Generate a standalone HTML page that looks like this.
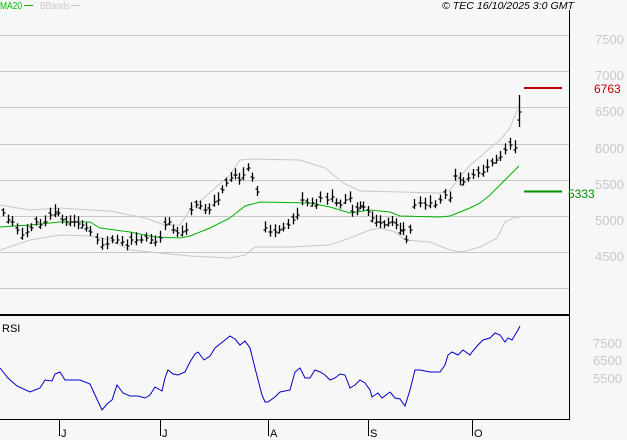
<!DOCTYPE html><html><head><meta charset="utf-8"><style>
body{margin:0;background:#f7f7f7;width:627px;height:440px;overflow:hidden;font-family:"Liberation Sans",sans-serif}
svg{display:block}
</style></head><body>
<svg id="s" width="627" height="440" xmlns="http://www.w3.org/2000/svg" font-family="Liberation Sans, sans-serif">
<rect width="627" height="440" fill="#f7f7f7"/>
<g stroke="#c8c8c8" stroke-width="1">
<line x1="0" y1="35.5" x2="569" y2="35.5"/><line x1="0" y1="71.5" x2="569" y2="71.5"/>
<line x1="0" y1="107.5" x2="569" y2="107.5"/><line x1="0" y1="144.5" x2="569" y2="144.5"/>
<line x1="0" y1="180.5" x2="569" y2="180.5"/><line x1="0" y1="216.5" x2="569" y2="216.5"/>
<line x1="0" y1="252.5" x2="569" y2="252.5"/><line x1="0" y1="288.5" x2="569" y2="288.5"/>
</g>
<line x1="569.5" y1="10" x2="569.5" y2="420" stroke="#000"/>
<line x1="0" y1="315" x2="570" y2="315" stroke="#000" stroke-width="2"/>
<line x1="0" y1="419.5" x2="570" y2="419.5" stroke="#000"/>
<g stroke="#000"><line x1="59.5" y1="420" x2="59.5" y2="436"/><line x1="160.5" y1="420" x2="160.5" y2="436"/><line x1="268.5" y1="420" x2="268.5" y2="436"/><line x1="368.5" y1="420" x2="368.5" y2="436"/><line x1="472.5" y1="420" x2="472.5" y2="436"/></g>
<g font-size="11" fill="#000"><text x="61" y="437">J</text><text x="162" y="437">J</text><text x="270" y="437">A</text><text x="370" y="437">S</text><text x="474" y="437">O</text></g>
<g font-size="13" fill="#c8c8c8"><text x="595" y="44">7500</text><text x="595" y="80">7000</text><text x="595" y="116">6500</text><text x="595" y="153">6000</text><text x="595" y="189">5500</text><text x="595" y="225">5000</text><text x="595" y="261">4500</text>
<text x="593" y="348">7500</text><text x="593" y="365">6500</text><text x="593" y="383">5500</text></g>
<text x="594" y="93" font-size="12" fill="#c00000">6763</text>
<text x="568" y="198" font-size="12" fill="#009000">5333</text>
<line x1="524" y1="88" x2="562" y2="88" stroke="#c00000" stroke-width="2"/>
<line x1="524" y1="191.5" x2="562" y2="191.5" stroke="#009000" stroke-width="2"/>
<text x="0" y="9" font-size="10" fill="#00c000" textLength="22" lengthAdjust="spacingAndGlyphs">MA20</text>
<line x1="24" y1="5.5" x2="33" y2="5.5" stroke="#00c000"/>
<text x="40" y="9" font-size="10" fill="#c8c8c8" textLength="30" lengthAdjust="spacingAndGlyphs">BBands</text>
<line x1="71" y1="5.5" x2="80" y2="5.5" stroke="#c8c8c8"/>
<text x="442" y="9" font-size="10" font-style="italic" fill="#000" textLength="132" lengthAdjust="spacingAndGlyphs">© TEC 16/10/2025 3:0 GMT</text>
<text x="2" y="332" font-size="11" fill="#000">RSI</text>
<g id="g"></g>
</svg>
<script>
var ns="http://www.w3.org/2000/svg",g=document.getElementById('g');
function pl(pts,col,w){var p=document.createElementNS(ns,'polyline');p.setAttribute('points',pts.map(function(a){return a[0]+','+a[1]}).join(' '));p.setAttribute('fill','none');p.setAttribute('stroke',col);p.setAttribute('stroke-width',w||1);g.appendChild(p);}
var up=[[0,205],[30,210],[60,208],[90,210],[110,211],[145,218],[165,225],[180,225],[190,210],[230,175],[240,160],[250,159],[300,160],[325,168],[343,183],[360,191],[440,193],[450,190],[460,177],[470,165],[480,157],[490,148],[500,140],[510,128],[519,105]];
var lo=[[0,250],[30,240],[60,235],[90,236],[110,240],[130,250],[150,252],[190,256],[230,258],[245,255],[255,247],[290,247],[330,245],[350,238],[370,230],[380,228],[395,232],[405,240],[430,242],[450,250],[462,252],[480,247],[497,238],[505,222],[515,217],[519,218]];
var ma=[[0,227],[30,225],[60,222],[90,222],[100,228],[130,232],[155,237],[180,238],[190,236],[210,228],[230,218],[245,206],[260,202],[310,203],[330,207],[350,213],[370,210],[390,212],[400,216],[440,217],[450,216],[460,212],[470,208],[480,203],[490,195],[500,185],[510,175],[519,166]];
var rsi=[[0,368],[8,378],[17,386],[30,392],[40,388],[45,380],[52,381],[55,374],[60,372],[65,380],[80,380],[90,384],[95,395],[102,410],[107,404],[112,400],[117,385],[123,393],[130,396],[138,396],[145,398],[150,395],[155,387],[162,391],[165,378],[168,370],[173,374],[178,375],[185,372],[190,362],[195,354],[198,352],[204,360],[210,356],[215,348],[225,340],[230,336],[235,339],[240,345],[245,341],[250,348],[256,372],[262,395],[265,402],[268,402],[275,397],[280,392],[290,390],[295,372],[300,368],[305,378],[310,378],[315,370],[320,372],[325,375],[330,380],[335,378],[340,374],[345,375],[350,388],[355,385],[360,380],[365,383],[370,390],[372,397],[378,393],[382,398],[390,392],[395,398],[400,399],[405,406],[410,390],[415,370],[420,370],[430,372],[440,372],[445,365],[448,355],[452,352],[458,355],[463,350],[470,355],[472,352],[478,345],[483,340],[490,338],[495,333],[500,335],[505,342],[508,338],[512,340],[518,330],[520,326]];
pl(up,'#c8c8c8');pl(lo,'#c8c8c8');pl(ma,'#00b000');pl(rsi,'#0000c8');
var bars=[[3,213],[8,220],[12,222],[17,230],[22,235],[27,232],[31,228],[36,222],[40,225],[45,222],[50,215],[55,212],[58,213],[62,220],[66,222],[70,222],[74,222],[78,224],[82,225],[86,228],[90,232],[97,240],[102,245],[107,244],[112,240],[117,240],[122,242],[127,246],[131,240],[136,240],[141,240],[146,238],[151,240],[155,242],[160,238],[165,225],[169,222],[173,230],[177,233],[182,232],[186,230],[191,210],[196,205],[200,206],[205,210],[209,210],[214,202],[218,200],[222,190],[226,183],[231,178],[235,175],[239,180],[243,175],[248,168],[252,178],[257,192],[265,228],[270,232],[275,232],[279,230],[283,228],[288,225],[293,220],[297,215],[302,200],[307,203],[312,203],[316,205],[320,198],[327,200],[332,197],[336,203],[340,205],[345,200],[350,198],[352,212],[357,210],[360,206],[363,207],[368,212],[372,218],[376,222],[380,223],[384,225],[388,223],[392,222],[396,225],[400,230],[403,230],[406,240],[410,230],[414,205],[420,203],[425,205],[430,203],[435,205],[440,200],[445,195],[450,198],[455,176],[460,180],[463,182],[468,178],[473,175],[478,173],[483,172],[487,167],[492,163],[496,160],[500,157],[505,150],[510,145],[515,148]];
var d="";
bars.forEach(function(b,i){var x=b[0]+.5,c=b[1],r=8+(i*7%6),h=c-r*0.6,l=c+r*0.4,o=c+((i*5%7)-3);d+="M"+x+" "+h+"V"+l+"M"+(x-2)+" "+o+"H"+x+"M"+x+" "+c+"H"+(x+2);});
d+="M519.5 95V127M519.5 112H521.5M517.5 120H519.5";
var p=document.createElementNS(ns,'path');p.setAttribute('d',d);p.setAttribute('stroke','#000');p.setAttribute('fill','none');p.setAttribute('stroke-width','1.3');g.appendChild(p);
</script>
</body></html>
